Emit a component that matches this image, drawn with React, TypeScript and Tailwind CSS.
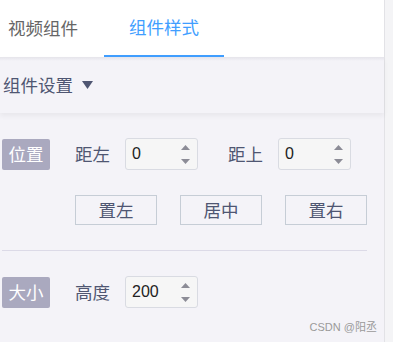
// --- Helpers ---
const Spinner = () => (
  <div className="absolute right-[7px] top-0 h-full flex flex-col justify-center gap-[9px]">
    <svg width="9" height="5" viewBox="0 0 9 5">
      <path d="M4.5 0 L9 5 L0 5 Z" fill="#8c8c96" />
    </svg>
    <svg width="9" height="5" viewBox="0 0 9 5">
      <path d="M0 0 L9 0 L4.5 5 Z" fill="#8c8c96" />
    </svg>
  </div>
);

const NumberInput = ({ value }: { value: string }) => (
  <div className="relative w-[73px] h-[32px] rounded-[3px] border border-[#d9dbe2] bg-[#f6f6f6] flex items-center pl-[6px] text-[16px] text-[#222] font-['Liberation_Sans',sans-serif]">
    {value}
    <Spinner />
  </div>
);

const Badge = ({ children }: { children: string }) => (
  <div className="w-[48px] h-[31px] rounded-[2px] bg-[#aaa9bf] text-white text-[17.5px] flex items-center justify-center">
    {children}
  </div>
);

const Label = ({ children }: { children: string }) => (
  <span className="w-[35px] text-[17.5px] text-[#4f5672] leading-none">{children}</span>
);

const AlignButton = ({ children }: { children: string }) => (
  <button className="w-[82px] h-[30px] border border-[#c6cdd6] text-[17.5px] text-[#4f5672] flex items-center justify-center">
    {children}
  </button>
);

export default function App() {
  return (
    <div className="w-[393px] h-[342px] flex bg-[#f4f4f6] overflow-hidden font-['Noto_Sans_CJK_SC',sans-serif]">
      {/* --- Panel --- */}
      <div className="w-[385px] flex flex-col bg-[#f4f3f8] border-r border-[#e2e2e6] relative">
        {/* Tabs */}
        <div className="h-[57px] bg-white flex items-stretch shrink-0">
          <div className="w-[104px] pl-[8px] flex items-center text-[17.5px] text-[#666]">视频组件</div>
          <div className="w-[120px] flex items-center justify-center text-[17.5px] text-[#409eff] border-b-2 border-[#409eff]">
            组件样式
          </div>
        </div>

        {/* Settings header */}
        <div className="h-[56px] flex items-center pl-[3px] gap-[9px] shadow-[0_3px_5px_rgba(0,0,0,0.05)] relative z-10 before:content-[''] before:absolute before:top-0 before:left-0 before:right-0 before:h-[4px] before:bg-gradient-to-b before:from-[#e5e4ea] before:to-transparent">
          <span className="text-[17.5px] text-[#4f5672]">组件设置</span>
          <svg width="11" height="8" viewBox="0 0 11 8">
            <path d="M0 0 L11 0 L5.5 8 Z" fill="#4f5672" />
          </svg>
        </div>

        {/* Content */}
        <div className="pl-[2px] pr-[17px] pt-[25px]">
          {/* Position */}
          <div className="flex items-center h-[32px]">
            <Badge>位置</Badge>
            <div className="ml-[25px] flex items-center gap-[15px]">
              <Label>距左</Label>
              <NumberInput value="0" />
            </div>
            <div className="ml-[30px] flex items-center gap-[15px]">
              <Label>距上</Label>
              <NumberInput value="0" />
            </div>
          </div>
          <div className="mt-[25px] ml-[73px] flex gap-[23px]">
            <AlignButton>置左</AlignButton>
            <AlignButton>居中</AlignButton>
            <AlignButton>置右</AlignButton>
          </div>

          <div className="mt-[25px] h-px bg-[#dcdae7]" />

          {/* Size */}
          <div className="mt-[25px] flex items-center h-[32px]">
            <Badge>大小</Badge>
            <div className="ml-[25px] flex items-center gap-[15px]">
              <Label>高度</Label>
              <NumberInput value="200" />
            </div>
          </div>
        </div>

        <div className="absolute right-[7px] bottom-[7px] text-[11px] text-[#9a9a9a] font-['Liberation_Sans','Noto_Sans_CJK_SC',sans-serif]">
          CSDN @阳丞
        </div>
      </div>
    </div>
  );
}
